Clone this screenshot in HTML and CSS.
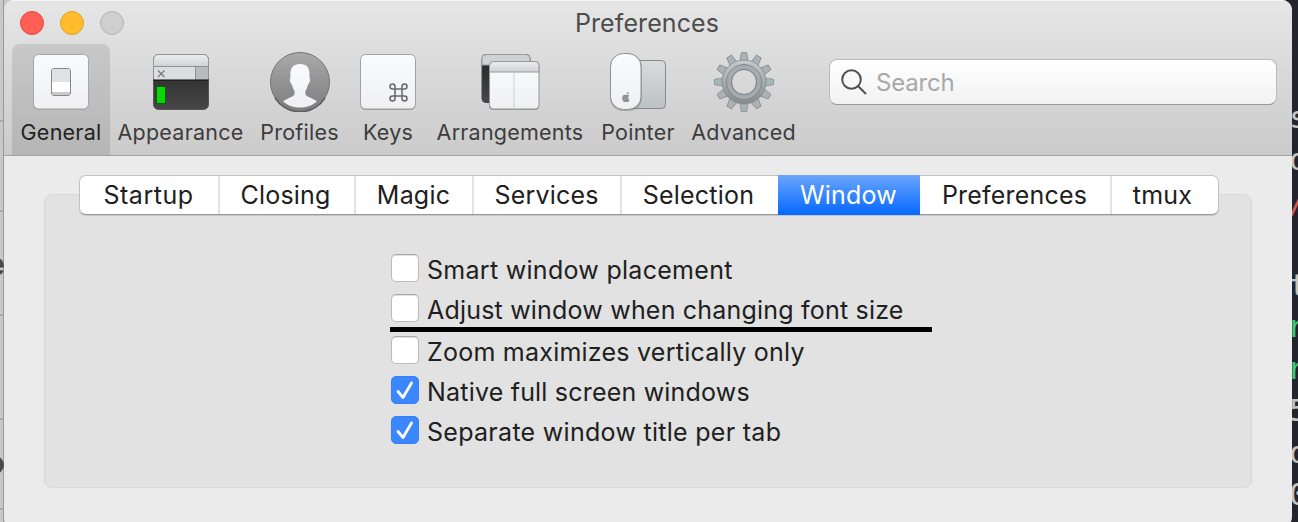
FILE: index.html
```html
<!DOCTYPE html>
<html lang="en">
<head>
<meta charset="utf-8">
<title>Preferences</title>
<link rel="stylesheet" href="styles.css">
</head>
<body>
<div class="desktop">
  <div class="strip strip-left">
    <i class="rule r1"></i><i class="rule r2"></i><i class="rule r3"></i><i class="rule r4"></i><i class="rule r5"></i>
    <span class="side-text">e</span><i class="dot"></i>
  </div>
  <main class="window">
    <header class="header">
      <div class="titlebar">
        <div class="lights"><i class="light red"></i><i class="light yellow"></i><i class="light gray"></i></div>
        <h1 class="title">Preferences</h1>
      </div>
      <nav class="toolbar">
        <div class="tool general active">
          <svg class="icon" width="64" height="64" viewBox="1 0 64 64">
            <defs>
              <linearGradient id="tile" x2="0" y2="1"><stop stop-color="#f9fcff"/><stop offset="1" stop-color="#efeff4"/></linearGradient>
              <linearGradient id="bar" x2="0" y2="1"><stop stop-color="#eceeef"/><stop offset="1" stop-color="#cfd2d3"/></linearGradient>
              <linearGradient id="dark" x2="0" y2="1"><stop stop-color="#242424"/><stop offset="1" stop-color="#474747"/></linearGradient>
              <linearGradient id="steel" x2="0" y2="1"><stop stop-color="#c3cccf"/><stop offset="1" stop-color="#858b8d"/></linearGradient>
            </defs>
            <rect x="5" y="6.7" width="55" height="55" rx="5" fill="#888" opacity=".55"/>
            <rect x="5.5" y="6.5" width="55" height="54.5" rx="5" fill="url(#tile)" stroke="#a6a6a8"/>
            <rect x="23.5" y="20.5" width="19" height="27" rx="2.5" fill="#fff" stroke="#88888b"/>
            <path d="M24 23a2 2 0 0 1 2-2h14a2 2 0 0 1 2 2v11H24z" fill="#dfe1e7"/>
            <path d="M24 44h18v1a2 2 0 0 1-2 2H26a2 2 0 0 1-2-2z" fill="#c9c9ca"/>
          </svg>
          <span class="label">General</span>
        </div>
        <div class="tool appearance">
          <svg class="icon" width="64" height="64" viewBox="0 0 64 64">
            <rect x="4.5" y="6.5" width="55" height="55" rx="5" fill="url(#dark)" stroke="#555"/>
            <path d="M4.5 18.500v-7a5 5 0 0 1 5-5h45a5 5 0 0 1 5 5v7z" fill="url(#bar)" stroke="#95989a"/>
            <path d="M4.500 18.500h42v13.500h-42z" fill="#dcdddf"/><path d="M46.500 18.500h13v13.500h-13z" fill="#b8babc"/>
            <path d="M4.500 18.500h55M46.500 18.500v14M4.500 18.500v14M59.500 18.500v14" stroke="#8e9193" fill="none"/>
            <path d="M4 32h56" stroke="#080808"/>
            <path d="m9 22.500 6.500 6.500m0-6.500L9 29" stroke="#777" stroke-width="1.200"/>
            <rect x="7" y="38" width="10" height="18" rx="1" fill="#075b07"/><rect x="8" y="39" width="8" height="16" fill="#0bd60b"/>
          </svg>
          <span class="label">Appearance</span>
        </div>
        <div class="tool profiles">
          <svg class="icon" width="64" height="64" viewBox="0 0 64 64">
            <defs><linearGradient id="disc" x2="0" y2="1"><stop stop-color="#aaa"/><stop offset="1" stop-color="#7c7c7c"/></linearGradient></defs>
            <circle cx="32" cy="34" r="29.500" fill="url(#disc)" stroke="#737374"/>
            <path d="M7 50a29.500 29.500 0 0 0 50 0" fill="none" stroke="#606062" stroke-width="1.500"/>
            <path d="M32 16c6.500 0 10 3.500 9.500 12 0 1.500-.1 2 .2 2.500 1.100.7-.2 5-1.700 6-.7 3-1.700 5-2.500 6.500-.6 4 .5 4.800 4 6.200 3 1.200 5 2.500 7.500 4-9 8.500-25 8.500-34 0 2.500-1.500 4.500-2.800 7.500-4 3.500-1.400 4.500-2.200 4-6.200-1-1.500-1.900-3.500-2.600-6.500-1.500-1-2.800-5.300-1.700-6 .3-.5.200-1 .2-2.500-.5-8.500 3-12 9.600-12z" fill="url(#tile)"/>
          </svg>
          <span class="label">Profiles</span>
        </div>
        <div class="tool keys">
          <svg class="icon" width="64" height="64" viewBox="0 0 64 64">
            <rect x="4.500" y="7" width="55" height="55" rx="5" fill="#777" opacity=".6"/>
            <rect x="4.500" y="6.500" width="55" height="54.500" rx="5" fill="url(#tile)" stroke="#a1a1a4"/>
            <path d="M39 41h7v7h-7zM39 41v-2.500a2.500 2.500 0 1 0-2.500 2.500zM46 41v-2.500a2.500 2.500 0 1 1 2.500 2.500zM39 48v2.500a2.500 2.500 0 1 1-2.500-2.500zM46 48v2.500a2.500 2.500 0 1 0 2.500-2.500z" fill="none" stroke="#67676b" stroke-width="1.500"/>
          </svg>
          <span class="label">Keys</span>
        </div>
        <div class="tool arrangements">
          <svg class="icon" width="64" height="64" viewBox="0 0 64 64">
            <rect x="4" y="6.500" width="48" height="48" rx="4" fill="url(#dark)" stroke="#444"/>
            <path d="M4 17V10.500a4 4 0 0 1 4-4h40a4 4 0 0 1 4 4V17z" fill="#cfd1d2" stroke="#999c9d"/>
            <rect x="11" y="14" width="50" height="48" rx="4" fill="#777" opacity=".6"/>
            <rect x="11.500" y="13.500" width="49.500" height="47.500" rx="4" fill="url(#tile)" stroke="#949698"/>
            <path d="M11.500 24v-6.500a4 4 0 0 1 4-4H57a4 4 0 0 1 4 4V24z" fill="url(#bar)" stroke="#949698"/>
            <path d="M36 25v36" stroke="#cfd1d6"/>
          </svg>
          <span class="label">Arrangements</span>
        </div>
        <div class="tool pointer">
          <svg class="icon" width="64" height="64" viewBox="0 0 64 64">
            <defs><linearGradient id="pad" x2="0" y2="1"><stop stop-color="#d8dcdd"/><stop offset="1" stop-color="#bcc1c1"/></linearGradient></defs>
            <rect x="17" y="12.500" width="42.500" height="48" rx="4" fill="url(#pad)" stroke="#848a8b"/>
            <rect x="4" y="6" width="32" height="57" rx="13" fill="#777" opacity=".45"/>
            <rect x="4.500" y="5.500" width="30.500" height="56" rx="13" fill="url(#tile)" stroke="#8d8f92"/>
            <path d="M20.700 46.200c.1-1.500.9-2.300 2.100-2.500.1 1.400-.8 2.400-2.100 2.500zM23.500 52c-.7 1.500-1.500 2.500-2.500 2.100-.7-.3-1.200-.3-1.900 0-1.500.6-3.400-3-2.800-5.400.5-1.700 2-2.400 4-1.600 1.100-.5 2.200-.5 3 .4-1.600 1.200-1.400 3.500.2 4.500z" fill="#929297"/>
          </svg>
          <span class="label">Pointer</span>
        </div>
        <div class="tool advanced">
          <svg class="icon" width="64" height="64" viewBox="0 0 64 64">
            <g transform="translate(32 34)" fill="url(#steel)" stroke="#858b8e" stroke-width=".8">
              <g fill="#aab3b6">
                <path id="tooth" d="m-4-21 1.300-8.500h5.400L4-21"/>
                <use href="#tooth" transform="rotate(30)"/><use href="#tooth" transform="rotate(60)"/><use href="#tooth" transform="rotate(90)"/><use href="#tooth" transform="rotate(120)"/><use href="#tooth" transform="rotate(150)"/><use href="#tooth" transform="rotate(180)"/><use href="#tooth" transform="rotate(210)"/><use href="#tooth" transform="rotate(240)"/><use href="#tooth" transform="rotate(270)"/><use href="#tooth" transform="rotate(300)"/><use href="#tooth" transform="rotate(330)"/>
              </g>
              <path fill-rule="evenodd" d="M0-22a22 22 0 1 1 0 44 22 22 0 0 1 0-44zm0 9.500a12.500 12.500 0 1 0 0 25 12.500 12.500 0 0 0 0-25z"/>
              <circle r="15" fill="none" stroke="#a5acaf" stroke-width="4"/><circle r="17.500" fill="none" stroke="#838a8d" stroke-width="1"/><circle r="12.700" fill="none" stroke="#80878a" stroke-width="1"/>
            </g>
          </svg>
          <span class="label">Advanced</span>
        </div>
        <div class="search">
          <svg width="26" height="26" viewBox="0 0 26 26"><circle cx="10.500" cy="10.500" r="9.300"/><path d="m17 17 8 8"/></svg>
          <span class="placeholder">Search</span>
        </div>
      </nav>
    </header>
    <section class="content">
      <div class="tabs">
        <div class="tab t-startup">Startup</div><div class="tab t-closing">Closing</div><div class="tab t-magic">Magic</div><div class="tab t-services">Services</div><div class="tab t-selection">Selection</div><div class="tab t-window selected">Window</div><div class="tab t-preferences">Preferences</div><div class="tab t-tmux">tmux</div>
      </div>
      <div class="panel">
        <div class="options">
          <label class="option"><i class="box"></i><span class="o1">Smart window placement</span></label>
          <label class="option"><i class="box"></i><span class="o2">Adjust window when changing font size</span></label>
          <hr class="underline">
          <label class="option"><i class="box"></i><span class="o3">Zoom maximizes vertically only</span></label>
          <label class="option"><i class="box checked"><svg width="28" height="28" viewBox="0 0 28 28"><path d="m7 15.500 5 6 8.500-14.500"/></svg></i><span class="o4">Native full screen windows</span></label>
          <label class="option"><i class="box checked"><svg width="28" height="28" viewBox="0 0 28 28"><path d="m7 15.500 5 6 8.500-14.500"/></svg></i><span class="o5">Separate window title per tab</span></label>
        </div>
      </div>
    </section>
  </main>
  <div class="strip strip-right">
    <span class="code c1">s</span><span class="code c2">o</span><span class="code c3 coral">/</span><span class="code c4">t</span><span class="code c5 green">r</span><span class="code c6 green">r</span><span class="code c7">5</span><span class="code c8">o</span><span class="code c9">0</span>
  </div>
</div>
</body>
</html>
```
FILE: styles.css
```css
* { box-sizing: border-box; }
body { margin: 0; font-family: Inter, "Liberation Sans", sans-serif; font-weight: 400; color: #202020; }
.desktop { display: grid; grid-template-columns: 4px 1288px 6px; width: 1298px; height: 522px; overflow: hidden; background: linear-gradient(90deg, #c9c9c9 50%, #24242f 50%); }
.strip { position: relative; overflow: hidden; }
.strip-left { background: linear-gradient(90deg, #c8c8c8 75%, #999 75%); }
.rule { position: absolute; left: 0; width: 3px; height: 2px; background: #a9a9af; }
.r1 { top: 120px; } .r2 { top: 210px; } .r3 { top: 314px; } .r4 { top: 418px; } .r5 { top: 508px; }
.side-text { position: absolute; right: -1px; top: 248px; font-size: 30px; line-height: 32px; font-weight: 600; color: #4a4a4a; }
.dot { position: absolute; right: 0; top: 456px; width: 18px; height: 18px; border-radius: 50%; background: #4a4a4d; }
.strip-right { background: #24242f; }
.code { position: absolute; left: -3px; font: 31px/30px "DejaVu Sans Mono", monospace; color: #c5c5c0; }
.green { color: #3ecb70; } .coral { color: #d45b55; }
.c1 { top: 102px; } .c2 { top: 144px; } .c3 { top: 187px; left: -4px; } .c4 { top: 270px; } .c5 { top: 311px; left: -5px; } .c6 { top: 353px; left: -5px; } .c7 { top: 395px; } .c8 { top: 437px; } .c9 { top: 479px; }
.window { height: 527px; border-radius: 10px; overflow: hidden; background: #ebebeb; }
.header { height: 156px; background: linear-gradient(#e6e6e6, #cbcbcb); border-bottom: 1px solid #a3a3a3; border-top: 1px solid #f6f6f6; }
.titlebar { display: grid; grid-template-columns: 120px 1fr 120px; height: 43px; align-items: center; }
.lights { display: flex; gap: 16px; padding-left: 16px; }
.light { width: 24px; height: 24px; border-radius: 50%; border: 1px solid; }
.red { background: #ff5f57; border-color: #e1483f; } .yellow { background: #ffbd2e; border-color: #dfa023; } .gray { background: #cfcfcf; border-color: #b3b3b3; }
.title { margin: 1px 0 0 -2px; text-align: center; font-size: 25px; line-height: 43px; font-weight: 400; color: #4c4c4c; letter-spacing: .1px; }
.toolbar { display: flex; height: 111px; padding-left: 8px; }
.tool { display: flex; flex-direction: column; align-items: center; padding-top: 4px; flex-shrink: 0; color: #3c3c3c; }
.icon { display: block; }
.label { font-size: 21.500px; line-height: 26px; margin-top: 7px; white-space: nowrap; letter-spacing: .23px; }
.active { background: linear-gradient(#c8c8c8, #b5b5b5); border-radius: 8px 8px 0 0; color: #222; }
.general { width: 98px; } .appearance { width: 141px; } .profiles { width: 97px; } .keys { width: 80px; } .arrangements { width: 164px; } .pointer { width: 92px; } .advanced { width: 119px; }
.search { display: flex; align-items: center; gap: 9px; width: 448px; height: 46px; margin: 15px 0 0 26px; padding: 2px 11px; border: 1px solid #bababa; border-bottom-color: #999; border-radius: 8px; background: linear-gradient(#fff, #f2f2f2); font-size: 24px; color: #a8a8a8; letter-spacing: -.2px; }
.placeholder { padding-top: 1px; }
.search svg { fill: none; stroke: #505050; stroke-width: 2; }
.content { display: flex; flex-direction: column; padding: 19px 40px 0; }
.tabs { display: flex; align-self: flex-start; width: 1140px; height: 40px; margin-left: 35px; position: relative; z-index: 1; border: 1px solid #c3c3c3; border-bottom-color: #999; border-radius: 7px; background: #fff; box-shadow: 0 1px 1px #0002; }
.tab { display: flex; align-items: center; justify-content: center; flex-shrink: 0; padding-right: 1px; border-right: 2px solid #e2e2e2; font-size: 25px; letter-spacing: .2px; white-space: nowrap; }
.t-startup { width: 140px; letter-spacing: .5px; } .t-closing { width: 136px; padding-right: 3px; } .t-magic { width: 118px; } .t-services { width: 148px; } .t-selection { width: 156px; padding-right: 3px; border: 0; } .t-window { width: 142px; } .t-preferences { width: 192px; } .t-tmux { width: 106px; padding-right: 5px; border: 0; }
.selected { margin: -1px 0; border: 0; color: #fff; background: linear-gradient(#6ba5fb, #0468ff); }
.panel { height: 294px; margin-top: -21px; border: 1px solid #d9d9d9; border-radius: 8px; background: #e2e2e2; padding: 59px 0 0 346px; }
.options { display: flex; flex-direction: column; width: 542px; }
.option { display: flex; height: 40px; }
.box { width: 28px; height: 28px; margin-right: 8px; flex-shrink: 0; border: 1px solid #bbb; border-top-color: #a9a9a9; border-radius: 5px; background: #fff; box-shadow: inset 0 1px 1px #0002; }
.option span { font-size: 25px; line-height: 32px; white-space: nowrap; letter-spacing: .2px; }
.option .o1, .option .o5 { letter-spacing: .29px; }
.option .o3 { letter-spacing: .24px; }
.underline { width: 542px; height: 5px; margin: -7px 0 4px -1px; border: 0; background: #000; }
.checked { border-color: #3482f6; background: #3b87ff; box-shadow: none; }
.checked svg { display: block; margin: -1px; fill: none; stroke: #fff; stroke-width: 2.800; stroke-linecap: round; stroke-linejoin: round; }
```
